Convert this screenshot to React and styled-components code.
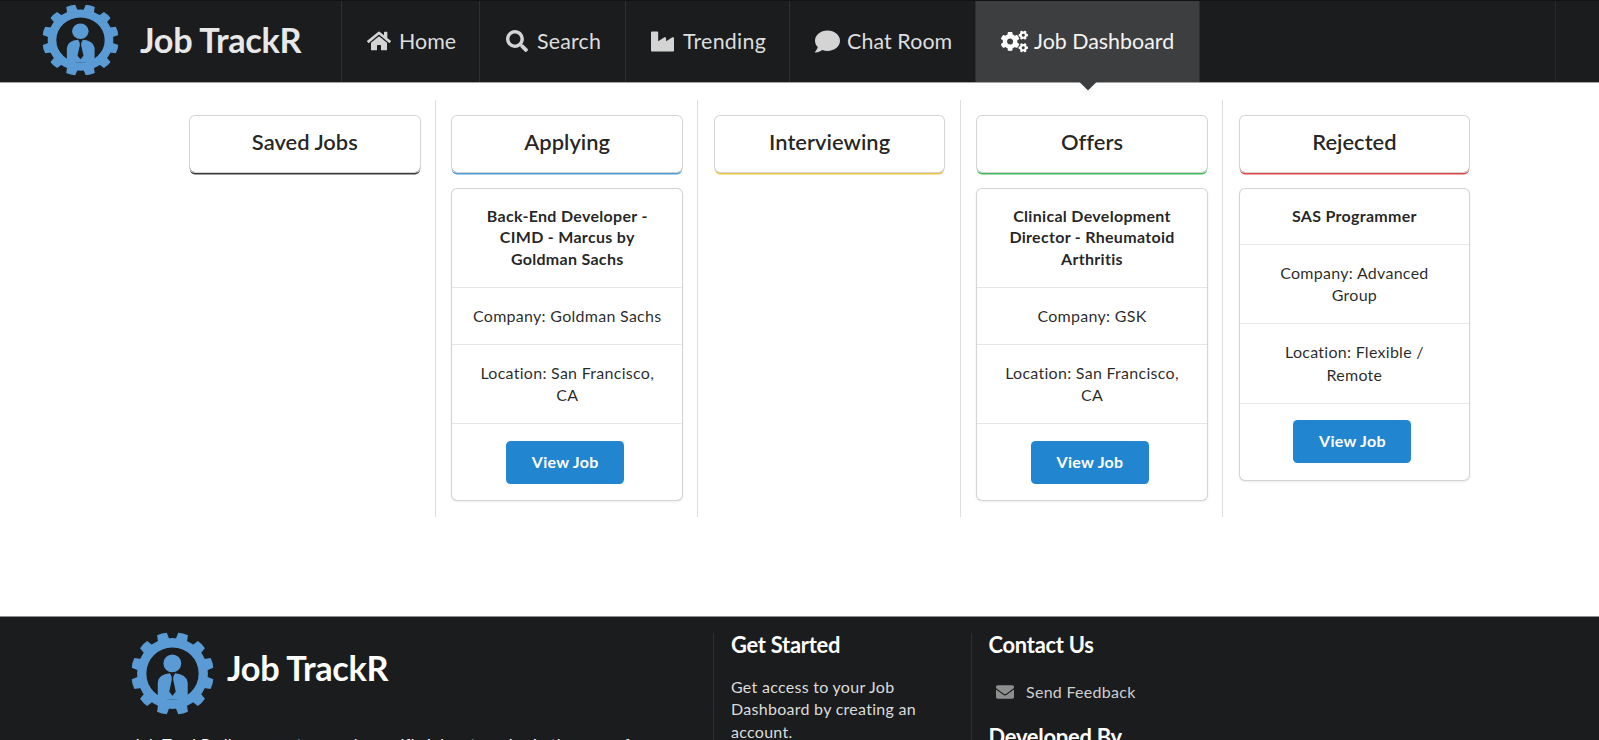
import React from "react";
import styled, { createGlobalStyle } from "styled-components";
import { FaHome, FaSearch, FaIndustry, FaComment, FaCogs, FaEnvelope } from "react-icons/fa";

const GlobalStyle = createGlobalStyle`
  *, *::before, *::after { box-sizing: border-box; }
  html, body { margin: 0; padding: 0; }
  body {
    font-family: Lato, "Liberation Sans", sans-serif;
    font-size: 16px;
    line-height: 22.86px;
    letter-spacing: 0.28px;
    color: rgba(0, 0, 0, 0.87);
    background: #fff;
    overflow: hidden;
  }
`;

const Page = styled.div`
  height: 740px;
  display: flex;
  flex-direction: column;
  overflow: hidden;
`;

const NavBar = styled.nav`
  display: flex;
  flex: none;
  height: 83px;
  padding-right: 43px;
  background: #1b1c1d;
  border-top: 1px solid #111213;
  border-bottom: 1px solid #a3a3a3;
`;

const Brand = styled.a`
  display: flex;
  align-items: center;
  width: 342px;
  padding: 0 0 4px 43px;
  gap: 22px;
  border-right: 1px solid #2d2e2f;
`;

const BrandName = styled.span`
  font-size: 34.3px;
  line-height: 40px;
  font-weight: 700;
  letter-spacing: -0.35px;
  color: ${(p) => p.$color || "#e8e8e8"};
  white-space: nowrap;
`;

const NavItem = styled.a`
  position: relative;
  display: flex;
  align-items: center;
  width: ${(p) => p.$width}px;
  padding: 0 0 1px ${(p) => p.$inset || 25}px;
  gap: ${(p) => p.$gap || 8}px;
  font-size: 21.4px;
  line-height: 24px;
  letter-spacing: ${(p) => p.$tracking || 0}px;
  white-space: nowrap;
  color: ${(p) => (p.$active ? "#f4f4f4" : "#dededf")};
  background: ${(p) => (p.$active ? "#3d3e3f" : "transparent")};
  border-right: 1px solid #2d2e2f;

  svg { flex: none; color: ${(p) => (p.$active ? "#fff" : "#d4d4d4")}; }
`;

const NavPointer = styled.span`
  position: absolute;
  left: 50%;
  bottom: -6px;
  width: 12px;
  height: 12px;
  margin-left: -6px;
  background: #3d3e3f;
  transform: rotate(45deg);
`;

const NavFill = styled.div`
  flex: 1;
  border-right: 1px solid #29292b;
`;

const Board = styled.main`
  display: grid;
  grid-template-columns: repeat(5, 262.4px);
  flex: none;
  height: 417px;
  margin: 17px 0 99px 172.7px;
`;

const Column = styled.section`
  padding: 16px 15.5px 0 16.4px;
  border-left: 1px solid ${(p) => (p.$first ? "transparent" : "#dcdddd")};
`;

const StageCard = styled.header`
  height: 56px;
  margin-bottom: 17px;
  padding-top: 12.5px;
  text-align: center;
  font-size: 21.9px;
  line-height: 25px;
  font-weight: 600;
  letter-spacing: 0.02px;
  border-radius: 5px;
  box-shadow: 0 0 0 1px #d4d4d5, 0 2.5px 0 0 ${(p) => p.$accent};
`;

const JobCard = styled.article`
  text-align: center;
  border-radius: 5px;
  box-shadow: 0 0 0 1px #d4d4d5, 0 1px 3px 0 #d4d4d5;
`;

const JobTitle = styled.h3`
  margin: 0;
  padding: 16px 20px 17.6px;
  font-size: 16px;
  line-height: 21.4px;
  font-weight: 700;
  letter-spacing: 0.3px;
`;

const JobLine = styled.p`
  margin: 0;
  padding: 17px 19px 16.6px;
  border-top: 1px solid #e6e7e7;
  line-height: 22.4px;
  color: rgba(0, 0, 0, 0.85);
`;

const JobActions = styled.div`
  padding: 16.5px 4px 16.5px 0;
  border-top: 1px solid #e6e7e7;
  display: flex;
  justify-content: center;
`;

const ViewButton = styled.button`
  width: 118px;
  height: 43px;
  padding: 0 0 1px;
  border: 0;
  border-radius: 4.5px;
  background: #2185d0;
  color: #fff;
  font: 700 16px/16px Lato, sans-serif;
  letter-spacing: 0.3px;
`;

const Footer = styled.footer`
  display: grid;
  grid-template-columns: 580px 257.5px 1fr;
  flex: none;
  height: 240px;
  padding: 16px 0 0 133px;
  color: #fff;
  background: #1b1c1d;
  border-top: 1px solid #8e8e8f;
`;

const FooterColumn = styled.div`
  padding-left: ${(p) => (p.$first ? 0 : 17)}px;
  border-left: ${(p) => (p.$first ? "0" : "1px solid #2d2e2f")};
`;

const FooterBrand = styled.div`
  display: flex;
  gap: 14px;
  height: 100px;
  margin-left: -1px;

  ${BrandName} { margin-top: 15px; }
`;

const FooterHeading = styled.h4`
  margin: ${(p) => p.$top || 0}px 0 ${(p) => p.$space || 20}px;
  font-size: 21.9px;
  line-height: 25px;
  font-weight: 700;
  letter-spacing: -0.25px;
`;

const FooterText = styled.p`
  margin: 0;
  width: ${(p) => p.$width}px;
  line-height: 22.4px;
  color: ${(p) => p.$color || "#dcdcdc"};
`;

const FeedbackLink = styled.a`
  display: flex;
  align-items: center;
  gap: 12.5px;
  margin: 0 0 20px 7px;
  color: #cfcfcf;

  svg { color: #8d8e8e; }
`;

const TEETH = Array.from({ length: 12 }, (_, i) => 15 + i * 30);

function GearLogo({ width, height }) {
  return (
    <svg
      width={width}
      height={height}
      viewBox="0 0 100 100"
      preserveAspectRatio="none"
      fill="#5b9bd5"
      overflow="visible"
    >
      <circle cx="50" cy="50" r="38" fill="none" stroke="#5b9bd5" strokeWidth="11.5" />
      {TEETH.map((angle) => (
        <path key={angle} d="M42.6 10 L43.8 -0.4 Q50 -1.8 56.2 -0.4 L57.4 10 Z" transform={`rotate(${angle} 50 50)`} />
      ))}
      <circle cx="49.8" cy="37.5" r="11" />
      <path d="M31.8 82 V61 Q33 51 46.8 49.8 L48.8 53.5 L49.2 57 L46 72.5 L50 77.5 L54 72.5 L50.8 57 L51.2 53.5 L53.2 49.8 Q67 51 68.8 61 V82 Z" />
    </svg>
  );
}

const NAV_ITEMS = [
  { label: "Home", Icon: FaHome, width: 138, size: 24, gap: 8 },
  { label: "Search", Icon: FaSearch, width: 146, size: 22, inset: 26, gap: 9, tracking: 0.2 },
  { label: "Trending", Icon: FaIndustry, width: 164, size: 23, gap: 9, tracking: 0.25 },
  { label: "Chat Room", Icon: FaComment, width: 186, size: 25, gap: 7, tracking: 0.1 },
  { label: "Job Dashboard", Icon: FaCogs, width: 224, size: 27, gap: 6, active: true },
];

const STAGES = [
  { name: "Saved Jobs", accent: "#3a3a3b", jobs: [] },
  {
    name: "Applying",
    accent: "#4f9bd6",
    jobs: [{ title: "Back-End Developer - CIMD - Marcus by Goldman Sachs", company: "Goldman Sachs", location: "San Francisco, CA" }],
  },
  { name: "Interviewing", accent: "#edc445", jobs: [] },
  {
    name: "Offers",
    accent: "#3dbb5b",
    jobs: [{ title: "Clinical Development Director - Rheumatoid Arthritis", company: "GSK", location: "San Francisco, CA" }],
  },
  {
    name: "Rejected",
    accent: "#dc4848",
    jobs: [{ title: "SAS Programmer", company: "Advanced Group", location: "Flexible / Remote" }],
  },
];

export default function App() {
  return (
    <Page>
      <GlobalStyle />
      <NavBar>
        <Brand>
          <GearLogo width={75} height={70} />
          <BrandName>Job TrackR</BrandName>
        </Brand>
        {NAV_ITEMS.map(({ label, Icon, width, size, inset, gap, tracking, active }) => (
          <NavItem key={label} $width={width} $inset={inset} $gap={gap} $tracking={tracking} $active={active}>
            <Icon size={size} />
            {label}
            {active && <NavPointer />}
          </NavItem>
        ))}
        <NavFill />
      </NavBar>
      <Board>
        {STAGES.map((stage, i) => (
          <Column key={stage.name} $first={i === 0}>
            <StageCard $accent={stage.accent}>{stage.name}</StageCard>
            {stage.jobs.map((job) => (
              <JobCard key={job.title}>
                <JobTitle>{job.title}</JobTitle>
                <JobLine>{`Company: ${job.company}`}</JobLine>
                <JobLine>{`Location: ${job.location}`}</JobLine>
                <JobActions>
                  <ViewButton>View Job</ViewButton>
                </JobActions>
              </JobCard>
            ))}
          </Column>
        ))}
      </Board>
      <Footer>
        <FooterColumn $first>
          <FooterBrand>
            <GearLogo width={81} height={81} />
            <BrandName $color="#fff">Job TrackR</BrandName>
          </FooterBrand>
          <FooterText $width={560} $color="#fff">
            Job TrackR allows you to search specific job categories in the area of
          </FooterText>
        </FooterColumn>
        <FooterColumn>
          <FooterHeading $top={-1.5} $space={19.5}>Get Started</FooterHeading>
          <FooterText $width={200}>Get access to your Job Dashboard by creating an account.</FooterText>
        </FooterColumn>
        <FooterColumn>
          <FooterHeading $top={-1.5} $space={24.5}>Contact Us</FooterHeading>
          <FeedbackLink>
            <FaEnvelope size={18} />
            Send Feedback
          </FeedbackLink>
          <FooterHeading>Developed By</FooterHeading>
        </FooterColumn>
      </Footer>
    </Page>
  );
}
